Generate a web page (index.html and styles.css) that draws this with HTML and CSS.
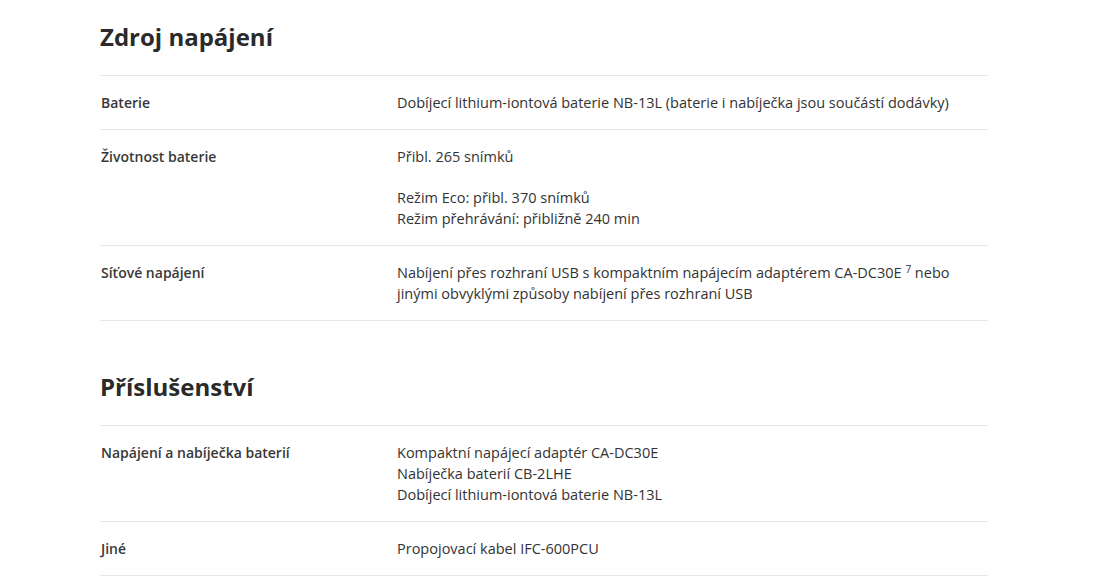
FILE: index.html
```html
<!DOCTYPE html>
<html lang="cs">
<head>
<meta charset="utf-8">
<link rel="stylesheet" href="styles.css">
</head>
<body>
<main class="specs">
  <section class="group">
    <h2 class="group-title">Zdroj napájení</h2>
    <div class="row">
      <div class="label">Baterie</div>
      <div class="value"><p>Dobíjecí lithium-iontová baterie NB-13L (baterie i nabíječka jsou součástí dodávky)</p></div>
    </div>
    <div class="row">
      <div class="label">Životnost baterie</div>
      <div class="value">
        <p>Přibl. 265 snímků</p>
        <p>Režim Eco: přibl. 370 snímků<br>Režim přehrávání: přibližně 240 min</p>
      </div>
    </div>
    <div class="row">
      <div class="label">Síťové napájení</div>
      <div class="value"><p>Nabíjení přes rozhraní USB s kompaktním napájecím adaptérem CA-DC30E <sup>7</sup> nebo jinými obvyklými způsoby nabíjení přes rozhraní USB</p></div>
    </div>
  </section>
  <section class="group">
    <h2 class="group-title">Příslušenství</h2>
    <div class="row">
      <div class="label">Napájení a nabíječka baterií</div>
      <div class="value"><p>Kompaktní napájecí adaptér CA-DC30E<br>Nabíječka baterií CB-2LHE<br>Dobíjecí lithium-iontová baterie NB-13L</p></div>
    </div>
    <div class="row">
      <div class="label">Jiné</div>
      <div class="value"><p>Propojovací kabel IFC-600PCU</p></div>
    </div>
  </section>
</main>
</body>
</html>
```

FILE: styles.css
```css
html, body {
  margin: 0;
  padding: 0;
  background: #ffffff;
}
body {
  font-family: "Open Sans", "Noto Sans", sans-serif;
  color: #333333;
}
.specs {
  width: 888px;
  margin-left: 100px;
  padding-top: 21px;
}
.group {
  margin-bottom: 50px;
}
.group-title {
  margin: 0;
  font-size: 24px;
  line-height: 32px;
  font-weight: 700;
  color: #2a2a2a;
  padding-bottom: 22px;
  border-bottom: 1px solid #e6e6e6;
}
.row {
  display: grid;
  grid-template-columns: 296px 1fr;
  padding: 16px 0 16px 1px;
  border-bottom: 1px solid #e6e6e6;
  font-size: 14.5px;
  line-height: 21px;
}
.label {
  font-size: 14px;
  font-weight: 600;
  color: #383838;
}
.value p {
  margin: 0;
}
.value p + p {
  margin-top: 20px;
}
.value sup {
  font-size: 10px;
  line-height: 0;
  vertical-align: 5px;
}
```
